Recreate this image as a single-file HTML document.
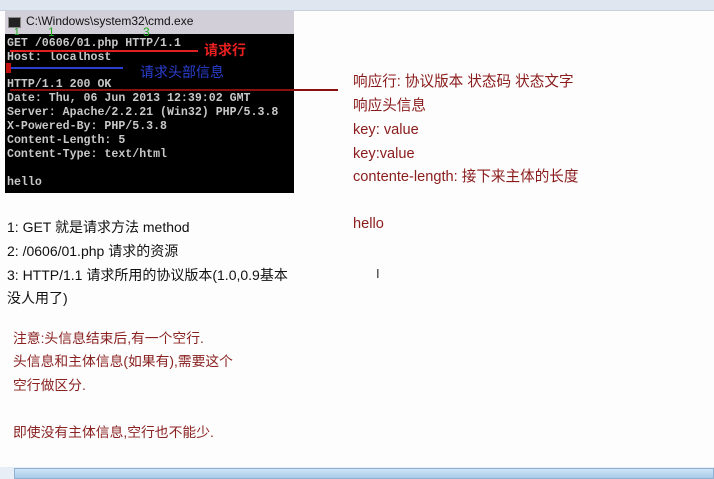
<!DOCTYPE html>
<html><head><meta charset="utf-8"><style>
body{margin:0;width:714px;height:479px;overflow:hidden;background:#fdfdfd;position:relative;font-family:"Liberation Sans","Noto Sans CJK SC",sans-serif}
.a{position:absolute;white-space:nowrap}
.top{left:0;top:0;width:714px;height:10px;background:#dfe6ef;border-bottom:1px solid #c8d2de}
.title{left:5px;top:11px;width:289px;height:23px;background:#d3cfd9}
.con{left:5px;top:34px;width:289px;height:159px;background:#000}
.m{font-family:"Liberation Mono",monospace;font-size:11.6px;color:#c8c8c8;font-weight:bold;left:7px}
.r{left:353px;font-size:14.6px;color:#8a1b1b;line-height:20px}
.k{left:7px;font-size:14px;color:#111;line-height:20px}
.n{left:13px;font-size:13.8px;color:#8a2222;line-height:20px}
</style></head><body>
<div class="a top"></div>
<div class="a title"></div>
<div class="a" style="left:8px;top:17px;width:11px;height:9px;background:#222;border:1px solid #888"></div>
<div class="a" style="left:26px;top:14px;font-size:12px;color:#111">C:\Windows\system32\cmd.exe</div>
<div class="a con"></div>
<div class="a m" style="top:37px">GET /0606/01.php HTTP/1.1</div>
<div class="a m" style="top:51px">Host: localhost</div>
<div class="a m" style="top:78px">HTTP/1.1 200 OK</div>
<div class="a m" style="top:92px">Date: Thu, 06 Jun 2013 12:39:02 GMT</div>
<div class="a m" style="top:106px">Server: Apache/2.2.21 (Win32) PHP/5.3.8</div>
<div class="a m" style="top:120px">X-Powered-By: PHP/5.3.8</div>
<div class="a m" style="top:134px">Content-Length: 5</div>
<div class="a m" style="top:148px">Content-Type: text/html</div>
<div class="a m" style="top:176px">hello</div>
<div class="a" style="left:10px;top:50px;width:188px;height:2px;background:#e02020"></div>
<div class="a" style="left:10px;top:67px;width:113px;height:2px;background:#2a3fd0"></div>
<div class="a" style="left:10px;top:89px;width:328px;height:2px;background:#8a1010"></div>
<div class="a" style="left:6px;top:63px;width:5px;height:10px;background:#c01010"></div>
<div class="a" style="left:204px;top:40px;font-size:14px;color:#e82020;font-weight:bold">请求行</div>
<div class="a" style="left:140px;top:62px;font-size:14px;color:#2a3fd0">请求头部信息</div>
<div class="a" style="left:14px;top:27px;font-size:10px;color:#2a2">1</div>
<div class="a" style="left:48px;top:25px;font-size:12px;color:#2a2">1</div>
<div class="a" style="left:143px;top:25px;font-size:12px;color:#2a2">3</div>
<div class="a r" style="top:72px">响应行: 协议版本 状态码 状态文字</div>
<div class="a r" style="top:96px">响应头信息</div>
<div class="a r" style="top:120px">key: value</div>
<div class="a r" style="top:144px">key:value</div>
<div class="a r" style="top:167px">contente-length: 接下来主体的长度</div>
<div class="a r" style="top:214px">hello</div>
<div class="a" style="left:376px;top:266px;font-size:13px;color:#333">I</div>
<div class="a k" style="top:217px">1: GET 就是请求方法 method</div>
<div class="a k" style="top:241px">2: /0606/01.php 请求的资源</div>
<div class="a k" style="top:265px">3: HTTP/1.1 请求所用的协议版本(1.0,0.9基本</div>
<div class="a k" style="top:288px">没人用了)</div>
<div class="a n" style="top:329px">注意:头信息结束后,有一个空行.</div>
<div class="a n" style="top:352px">头信息和主体信息(如果有),需要这个</div>
<div class="a n" style="top:376px">空行做区分.</div>
<div class="a n" style="top:423px">即使没有主体信息,空行也不能少.</div>
<div class="a" style="left:0;top:467px;width:714px;height:12px;background:#e8eef5"></div>
<div class="a" style="left:14px;top:468px;width:700px;height:11px;background:linear-gradient(#cfe4f6,#a9cbe9);border:1px solid #8fb2d2;box-sizing:border-box"></div>
</body></html>
